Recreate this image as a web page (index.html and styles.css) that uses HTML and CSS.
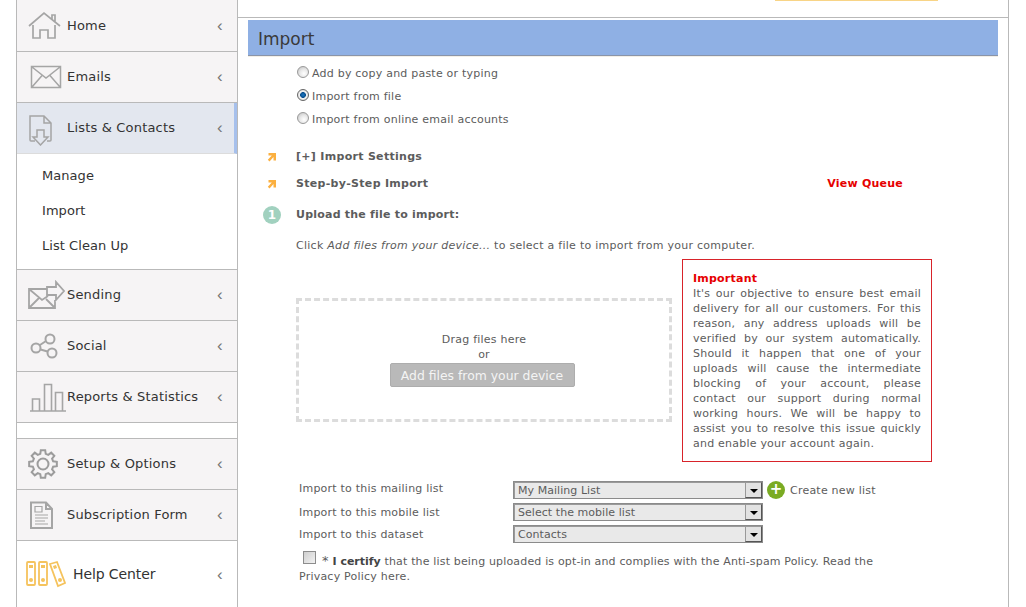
FILE: index.html
```html
<!DOCTYPE html>
<html lang="en">
<head>
<meta charset="utf-8">
<title>Import</title>
<link rel="stylesheet" href="styles.css">
</head>
<body>
<div class="page">
  <nav class="sidebar">
    <a class="nav-item nav-first"><span class="nav-icon"><svg width="34" height="30" viewBox="0 0 34 30"><path d="M1 16 16 3l16 13M5 15v13h7v-8h8v8h7V15M24 9V5h3v7" fill="none" stroke="#a5a5a5" stroke-width="1.700"/></svg></span><span class="nav-label">Home</span><span class="chev">‹</span></a>
    <a class="nav-item"><span class="nav-icon"><svg width="34" height="30" viewBox="0 0 34 30"><path d="M3.500 4.500h29v21h-29zM4 5l14 11L32 5M4 25l10.500-12M32 25 21.500 13" fill="none" stroke="#a5a5a5" stroke-width="1.500"/></svg></span><span class="nav-label">Emails</span><span class="chev">‹</span></a>
    <a class="nav-item nav-active"><span class="nav-icon"><svg width="34" height="36" viewBox="0 0 34 36"><path d="M7 31H3a1 1 0 0 1-1-1V6h14l7 7v17a1 1 0 0 1-1 1h-3M16 6v7h7M9 20h7v7h4l-7.500 8L5 27h4z" fill="none" stroke="#a5a5a5" stroke-width="1.500"/></svg></span><span class="nav-label">Lists &amp; Contacts</span><span class="chev">‹</span></a>
    <div class="submenu">
      <a class="sub-item">Manage</a>
      <a class="sub-item">Import</a>
      <a class="sub-item">List Clean Up</a>
    </div>
    <a class="nav-item"><span class="nav-icon"><svg width="40" height="30" viewBox="0 0 40 30"><path d="M19 9H1v19h26V20M1 9l13 11 6-4M2 27l9-9M26 27l-8-8M19 7h9V2l8 9-8 9v-5h-9z" fill="none" stroke="#a5a5a5" stroke-width="1.800"/></svg></span><span class="nav-label">Sending</span><span class="chev">‹</span></a>
    <a class="nav-item"><span class="nav-icon"><svg width="34" height="30" viewBox="0 0 34 30"><g fill="none" stroke="#a5a5a5" stroke-width="2"><circle cx="8" cy="17" r="4.500"/><circle cx="22" cy="8" r="4.500"/><circle cx="24" cy="22" r="4.500"/><path d="m12 14 6-4M12.500 18.500l7 2"/></g></svg></span><span class="nav-label">Social</span><span class="chev">‹</span></a>
    <a class="nav-item"><span class="nav-icon"><svg width="40" height="32" viewBox="0 0 40 32"><path d="M2 30h36M4.500 30V18h7v12M16.500 30V3.500h7V30M27.500 30V11.500h7V30" fill="none" stroke="#a5a5a5" stroke-width="1.600"/></svg></span><span class="nav-label">Reports &amp; Statistics</span><span class="chev">‹</span></a>
    <div class="nav-gap"></div>
    <a class="nav-item"><span class="nav-icon"><svg width="34" height="30" viewBox="0 0 34 30"><g fill="none" stroke="#9c9c9c" stroke-width="2"><circle cx="15" cy="15" r="5.500"/><path d="M12.280 4.860 12.810 1.170H17.190L17.720 4.860 20.250 5.910 23.230 3.670 26.330 6.770 24.090 9.750 25.140 12.280 28.830 12.810V17.190L25.140 17.720 24.090 20.250 26.330 23.230 23.230 26.330 20.250 24.090 17.720 25.140 17.190 28.830H12.810L12.280 25.140 9.750 24.090 6.770 26.330 3.670 23.230 5.910 20.250 4.860 17.720 1.170 17.190V12.810L4.860 12.280 5.910 9.750 3.670 6.770 6.770 3.670 9.750 5.910Z"/></g></svg></span><span class="nav-label">Setup &amp; Options</span><span class="chev">‹</span></a>
    <a class="nav-item"><span class="nav-icon"><svg width="34" height="30" viewBox="0 0 34 30"><path d="M3 2.500h15l6 6.500v19H3zM18 2.500V9h6" fill="none" stroke="#a5a5a5" stroke-width="2"/><path d="M7 6.500h7V12H7zM7 15h13M7 18h13M7 21h10M7 24h13" fill="none" stroke="#a5a5a5" stroke-width="1.200"/></svg></span><span class="nav-label">Subscription Form</span><span class="chev">‹</span></a>
    <a class="nav-item nav-help"><span class="nav-icon"><svg width="40" height="28" viewBox="0 0 40 28"><g fill="none" stroke="#f5c35d" stroke-width="1.800"><rect x="1" y="2" width="8" height="23" rx="1"/><rect x="13" y="2" width="8" height="23" rx="1"/><path d="m24 4 7-2 8 21-7 3z"/></g><g fill="#f5c35d"><rect x="3" y="5" width="4" height="3"/><rect x="15" y="5" width="4" height="3"/><circle cx="5" cy="20" r="2"/><circle cx="17" cy="20" r="2"/><circle cx="34" cy="20" r="2"/><path d="m27 6 3-1 1 3-3 1z"/></g></svg></span><span class="nav-label">Help Center</span><span class="chev">‹</span></a>
  </nav>

  <main class="content">
    <div class="top-strip"><span class="notice-edge"></span></div>
    <h1 class="title-bar">Import</h1>

    <div class="source-options">
      <label class="radio-row"><input type="radio" name="src" class="radio">Add by copy and paste or typing</label>
      <label class="radio-row"><input type="radio" name="src" class="radio" checked>Import from file</label>
      <label class="radio-row"><input type="radio" name="src" class="radio">Import from online email accounts</label>
    </div>

    <div class="step-row step-settings">
      <span class="step-mark"><svg width="10" height="10" viewBox="0 0 10 10"><path d="M1.500 1h7.500v7.500H6.500V5L2.500 9.500.8 7.800 4.800 3.500H1.500z" fill="#fbb040"/></svg></span>
      <strong>[+] Import Settings</strong>
    </div>
    <div class="step-row step-queue">
      <span class="step-mark"><svg width="10" height="10" viewBox="0 0 10 10"><path d="M1.500 1h7.500v7.500H6.500V5L2.500 9.500.8 7.800 4.800 3.500H1.500z" fill="#fbb040"/></svg></span>
      <strong class="step-grow">Step-by-Step Import</strong>
      <a class="queue-link">View Queue</a>
    </div>
    <div class="step-row step-upload">
      <span class="step-mark"><span class="step-num">1</span></span>
      <strong>Upload the file to import:</strong>
    </div>
    <p class="hint">Click <em>Add files from your device...</em> to select a file to import from your computer.</p>

    <div class="upload-area">
      <div class="dropzone">
        <span>Drag files here</span>
        <span>or</span>
        <button class="add-btn" type="button">Add files from your device</button>
      </div>
      <aside class="important">
        <b>Important</b>
        <p>It's our objective to ensure best email delivery for all our customers. For this reason, any address uploads will be verified by our system automatically. Should it happen that one of your uploads will cause the intermediate blocking of your account, please contact our support during normal working hours. We will be happy to assist you to resolve this issue quickly and enable your account again.</p>
      </aside>
    </div>

    <div class="form-grid">
      <span class="form-label form-label-first">Import to this mailing list</span>
      <div class="form-field">
        <div class="select"><span class="select-text">My Mailing List</span><span class="select-arrow"></span></div>
        <span class="plus">+</span><span class="create">Create new list</span>
      </div>
      <span class="form-label">Import to this mobile list</span>
      <div class="form-field"><div class="select"><span class="select-text">Select the mobile list</span><span class="select-arrow"></span></div></div>
      <span class="form-label">Import to this dataset</span>
      <div class="form-field"><div class="select"><span class="select-text">Contacts</span><span class="select-arrow"></span></div></div>
    </div>

    <p class="certify"><input type="checkbox" class="check"><span class="star">*</span> <b>I certify</b> <span class="certify-rest">that the list being uploaded is opt-in and complies with the Anti-spam Policy. Read the</span><br><span>Privacy Policy here.</span></p>
  </main>
</div>
</body>
</html>
```
FILE: styles.css
```css
* { box-sizing: border-box; }
html, body { margin: 0; height: 607px; overflow: hidden; background: #fff; }
body { font-family: Verdana, "DejaVu Sans", sans-serif; font-size: 11px; letter-spacing: .22px; color: #5c5c5c; }

.page { display: flex; padding-left: 16px; width: 1009px; height: 607px; }

.sidebar { width: 222px; flex: none; border-left: 1px solid #b9b9b9; border-right: 1px solid #b9b9b9; display: flex; flex-direction: column; }
.nav-item { display: flex; align-items: center; height: 51px; flex: none; padding-bottom: 1px; background: #f6f4f5; border-bottom: 1px solid #b9b9b9; color: #333; font-size: 13px; letter-spacing: .18px; }
.nav-first { height: 52px; padding: 0 0 1px; }
.nav-icon { width: 50px; flex: none; display: flex; }
.nav-icon svg { display: block; margin-left: 11px; flex: none; }
.nav-label { flex: 1; }
.chev { width: 20px; flex: none; font-size: 17px; color: #777; line-height: 1; font-family: "Liberation Sans", sans-serif; }
.nav-active { background: #e3e7ef; border-bottom-color: #dcdcdc; border-right: 3px solid #a6c0ec; }
.nav-active .chev { width: 17px; }
.submenu { height: 116px; flex: none; padding-top: 4px; border-bottom: 1px solid #b9b9b9; display: flex; flex-direction: column; background: #fff; }
.sub-item { height: 35px; display: flex; align-items: center; padding-left: 25px; font-size: 13px; letter-spacing: .05px; color: #333; }
.nav-gap { height: 16px; flex: none; border-bottom: 1px solid #b9b9b9; }
.nav-help { height: 66px; background: #fff; border-bottom: 0; font-size: 14px; padding-bottom: 0; letter-spacing: -.1px; }
.nav-help .nav-label { padding-left: 6px; }
.nav-help .nav-icon svg { margin-left: 9px; }

.content { width: 771px; flex: none; border-right: 1px solid #b9b9b9; padding: 0 10px; display: flex; flex-direction: column; }
.top-strip { height: 18px; margin: 0 -10px; border-bottom: 1px solid #b9b9b9; display: flex; flex: none; padding-left: 537px; align-items: flex-start; }
.notice-edge { width: 163px; height: 1px; background: #f8d486; }
.title-bar { margin: 2px 0 0; height: 36px; flex: none; padding: 8px 10px 0; background: #8fb0e4; border-bottom: 1px solid #8a94a8; font-size: 17px; font-weight: normal; letter-spacing: 0; line-height: 22px; color: #3a3a3a; box-shadow: 0 1px 0 #f3efe6; }

.source-options { display: flex; flex-direction: column; gap: 8px; padding: 10px 0 0 48px; }
.radio-row { display: flex; align-items: center; height: 15px; gap: 3px; }
.radio { appearance: none; width: 12px; height: 12px; margin: -3px 0 0 1px; border-radius: 50%; border: 1px solid #999; background: radial-gradient(circle at 60% 65%, #fff 0, #e8e8e8 45%, #bdbdbd 100%); }
.radio:checked { background: radial-gradient(circle, #1a78c4 0, #0b4f8e 36%, #f4f4f4 46%, #cfcfcf 100%); border-color: #666; }

.step-row { display: flex; align-items: center; height: 15px; padding-left: 15px; }
.step-row strong { font-weight: bold; letter-spacing: .3px; }
.step-mark { width: 33px; flex: none; display: flex; align-items: center; }
.step-mark svg { margin-left: 4px; }
.step-settings { margin-top: 22px; }
.step-queue { margin-top: 12px; }
.step-grow { flex: 1; }
.queue-link { color: #e60000; font-weight: bold; margin-right: 95px; flex: none; }
.step-upload { margin-top: 16px; }
.step-upload strong { letter-spacing: .22px; }
.step-num { width: 18px; height: 18px; border-radius: 50%; background: #a1d1bf; color: #fff; font-size: 12px; font-weight: bold; letter-spacing: 0; display: flex; align-items: center; justify-content: center; }
.hint { margin: 16px 0 0 48px; line-height: 15px; letter-spacing: .27px; }

.upload-area { display: flex; align-items: flex-start; margin: 6px 0 0 48px; }
.dropzone { width: 376px; height: 124px; margin-top: 39px; border: 3px dashed #dcdcdc; display: flex; flex-direction: column; align-items: center; padding-top: 31px; line-height: 15px; }
.add-btn { width: 185px; height: 24px; margin: 1px 4px 0 0; padding: 0; border: 1px solid #adadad; border-radius: 2px; background: #b9b9b9; color: #f4f4f4; font: 12.400px Verdana, "DejaVu Sans", sans-serif; letter-spacing: 0; }
.important { width: 250px; height: 203px; margin-left: 10px; border: 1px solid #d8232a; padding: 11px 10px 0; line-height: 15px; }
.important b { display: block; color: #e60000; }
.important p { margin: 0; text-align: justify; }

.form-grid { display: grid; grid-template-columns: 214px 1fr; grid-auto-rows: 18px; row-gap: 4px; margin: 19px 0 0 51px; align-items: center; }
.form-label { line-height: 15px; }
.form-label-first { margin-top: -4px; }
.form-field { display: flex; align-items: center; }
.select { width: 250px; height: 18px; display: flex; background: #e9e9e9; border: 1px solid #8b8b8b; align-items: stretch; box-shadow: inset 1px 1px 0 #9a9a9a; letter-spacing: .05px; }
.select-text { flex: 1; padding-left: 4px; line-height: 18px; }
.select-arrow { width: 17px; background: #e2e2e2; border: 1px solid #555; border-top-color: #999; border-left-color: #999; position: relative; }
.select-arrow::after { content: ""; position: absolute; left: 4px; top: 6px; border: 4px solid transparent; border-top: 4px solid #000; border-bottom: 0; }
.plus { width: 18px; height: 18px; margin-left: 4px; border-radius: 50%; background: #7aab23; color: #fff; font-size: 15px; font-weight: bold; letter-spacing: 0; line-height: 17px; text-align: center; }
.create { margin-left: 5px; }

.certify { margin: 8px 0 0 51px; width: 590px; line-height: 15px; white-space: nowrap; }
.certify b { color: #444; letter-spacing: 0; }
.certify-rest { letter-spacing: .16px; }
.check { appearance: none; width: 13px; height: 13px; margin: 0 6px 0 4px; vertical-align: 1px; border: 1px solid #8d8d8d; background: linear-gradient(135deg, #cfcfcf, #f2f2f2); }
.star { font-size: 13px; line-height: 1; }
```
